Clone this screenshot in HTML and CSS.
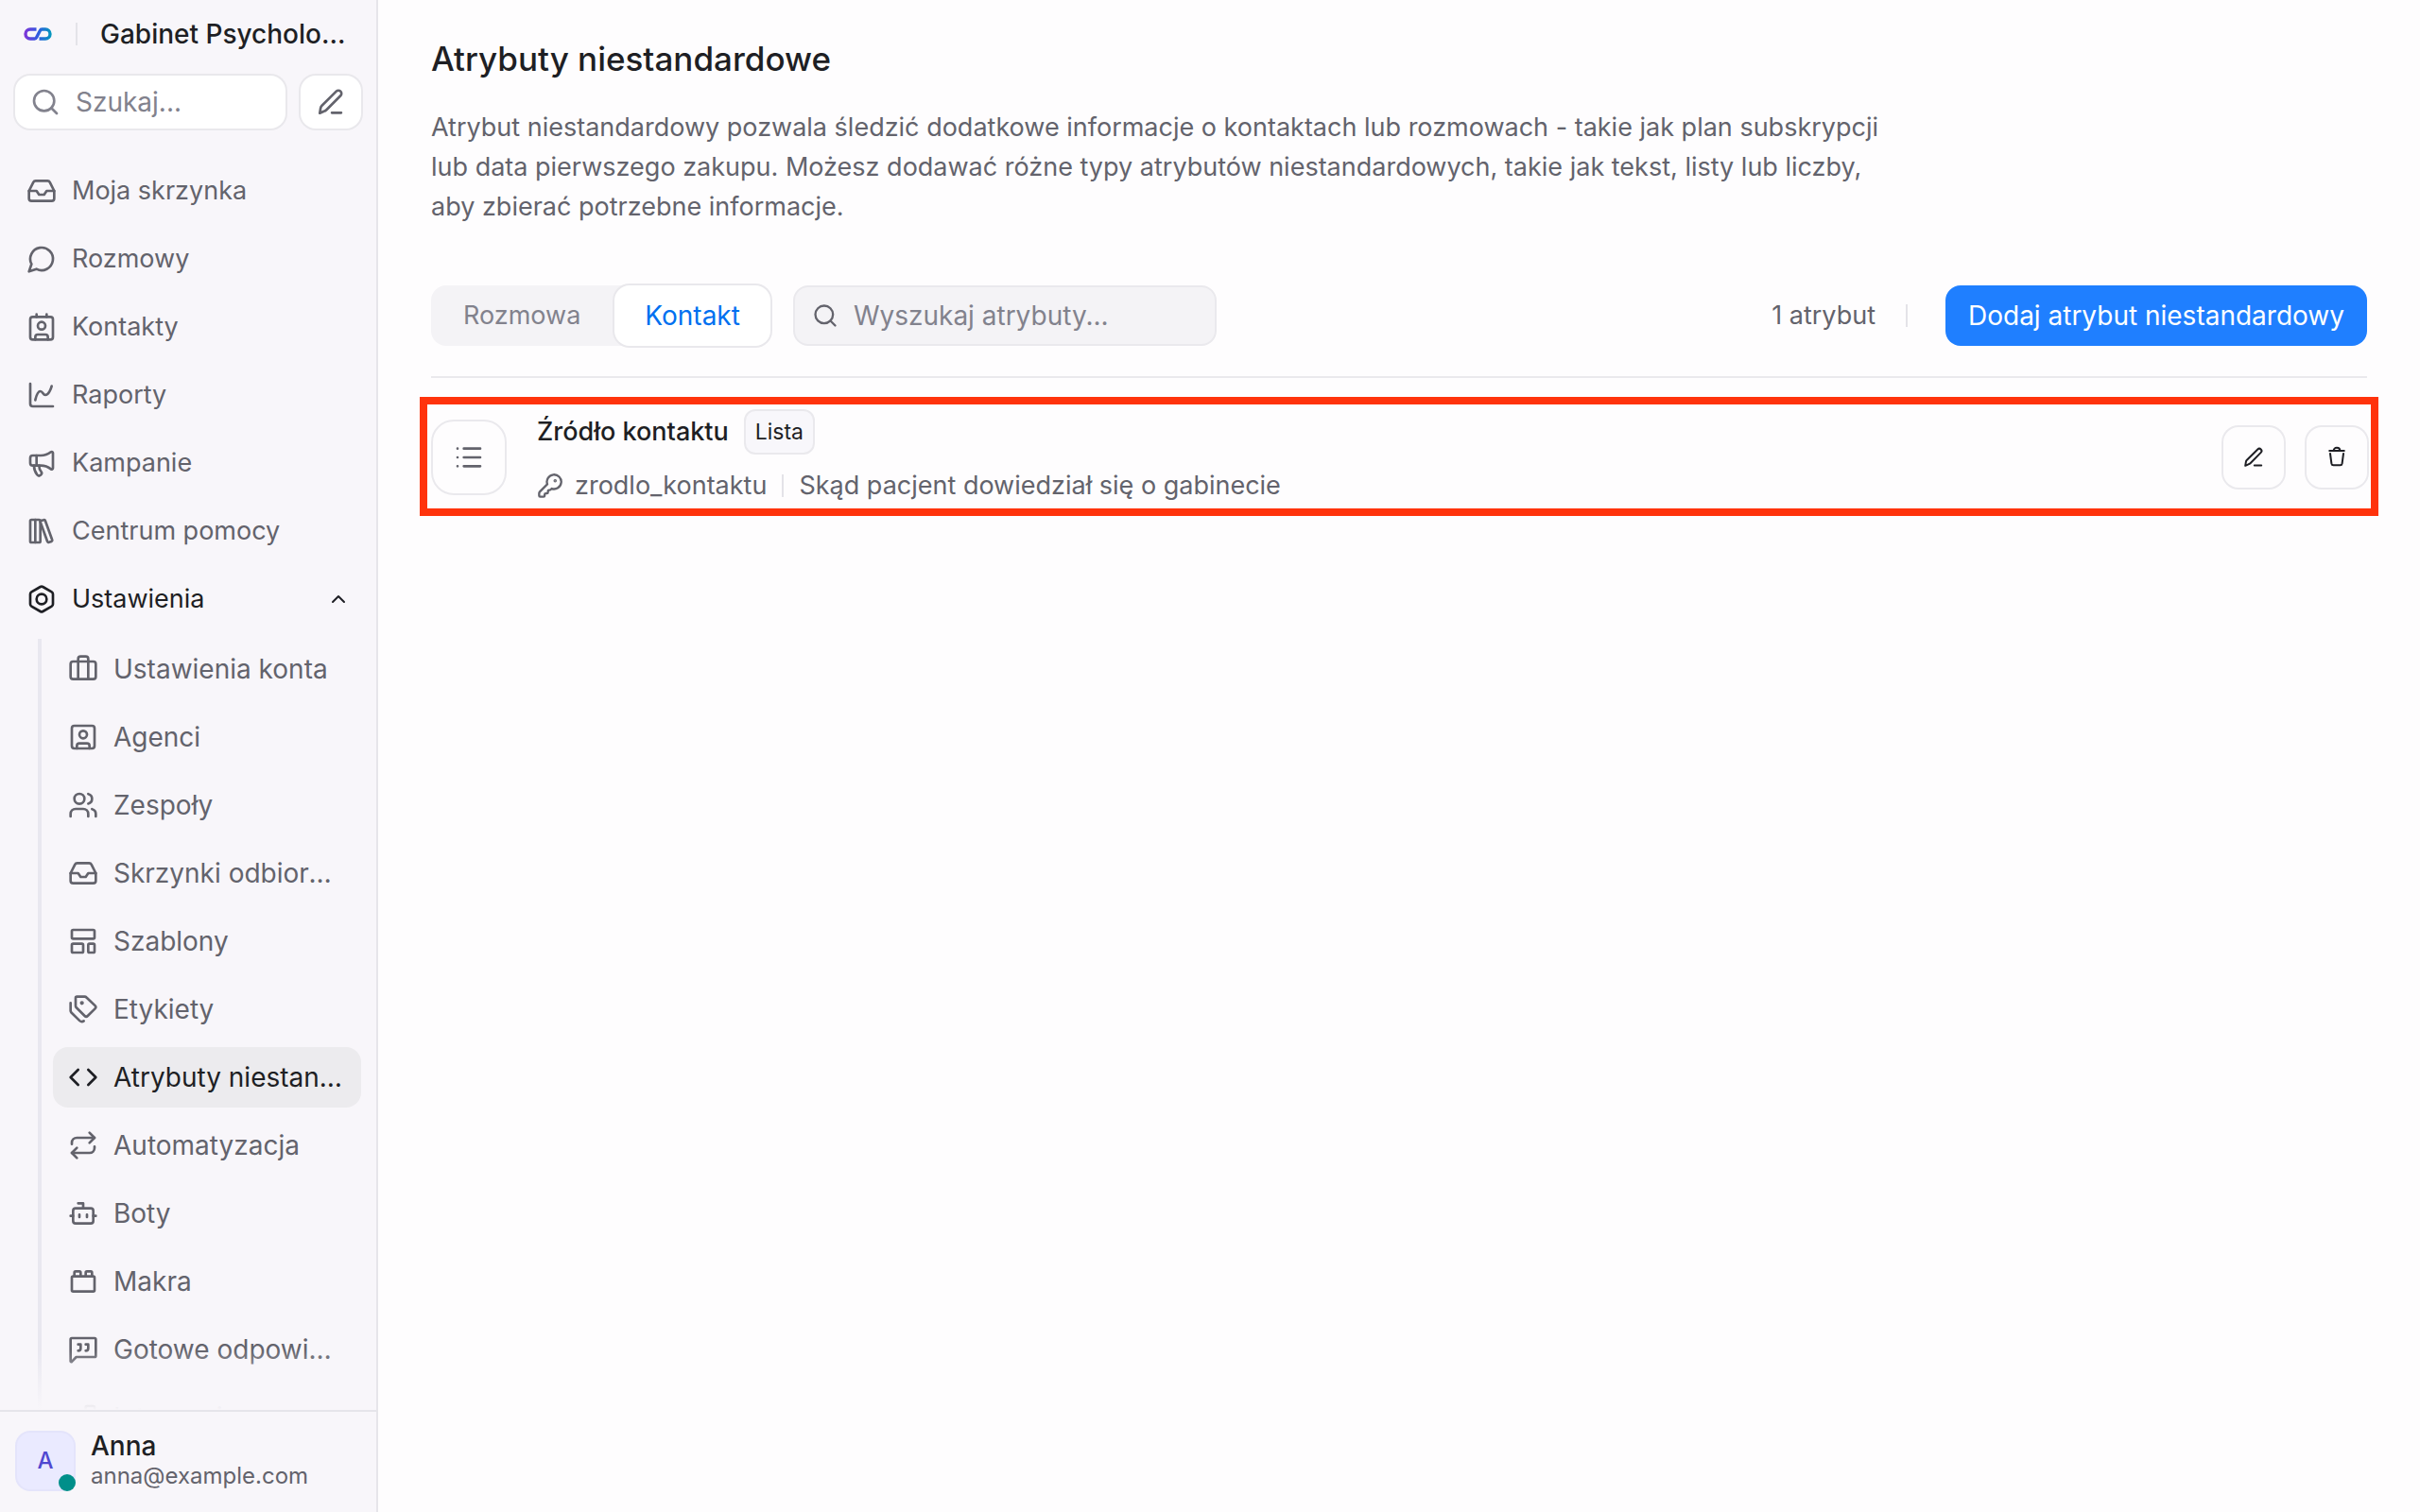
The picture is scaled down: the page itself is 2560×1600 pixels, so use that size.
FILE: index.html
```html
<!DOCTYPE html>
<html lang="pl">
<head>
  <meta charset="UTF-8" />
  <meta name="viewport" content="width=device-width, initial-scale=1.0" />
  <title>Atrybuty niestandardowe</title>
  <link rel="stylesheet" href="styles.css">
</head>
<body>
  <aside class="sidebar">
    <div class="brand">
      <svg class="logo" viewBox="0 0 32 16" fill="none" stroke-width="3.4">
        <defs>
          <linearGradient id="logoFill" gradientUnits="userSpaceOnUse" x1="0" y1="0" x2="32" y2="0">
            <stop offset="0" stop-color="#8b2fd6" />
            <stop offset="0.5" stop-color="#2f5be0" />
            <stop offset="1" stop-color="#00a0b8" />
          </linearGradient>
        </defs>
        <path stroke="url(#logoFill)" d="M14.500 3H8a5 5 0 0 0 0 10h4.500q1.500 0 2.200-1.500l3.600-7Q19 3 20.500 3H24a5 5 0 0 1 0 10h-6.500" />
      </svg>
      <span class="divider"></span>
      <span class="account">Gabinet Psychologiczny</span>
    </div>

    <div class="search-row">
      <label class="search">
        <svg class="icon" viewBox="0 0 24 24"><circle cx="11" cy="11" r="8" /><path d="m21 21-4.300-4.300" /></svg>
        <input type="search" placeholder="Szukaj..." aria-label="Szukaj" />
      </label>
      <button class="compose" aria-label="Nowa wiadomość">
        <svg class="icon" viewBox="0 0 24 24"><path d="M12.800 20.500h7.400M3.200 20.800l.7-4.100a3.500 3.500 0 0 1 1-1.900L16.300 3.500a2.400 2.400 0 0 1 3.400 3.400L8.500 18.200a4 4 0 0 1-2 1.100z" /></svg>
      </button>
    </div>

    <nav class="menu">
      <a href="#" class="item">
        <svg class="icon" viewBox="0 0 24 24"><path d="M22 12h-6l-2 3h-4l-2-3H2" /><path d="M5.450 5.110 2 12v6a2 2 0 0 0 2 2h16a2 2 0 0 0 2-2v-6l-3.450-6.890A2 2 0 0 0 16.760 4H7.240a2 2 0 0 0-1.790 1.110z" /></svg>
        <span>Moja skrzynka</span>
      </a>
      <a href="#" class="item">
        <svg class="icon" viewBox="0 0 24 24"><path d="M7.900 20A9 9 0 1 0 4 16.100L2 22Z" /></svg>
        <span>Rozmowy</span>
      </a>
      <a href="#" class="item">
        <svg class="icon" viewBox="0 0 24 24"><path d="M16 2v2M8 2v2M7 22v-2a2 2 0 0 1 2-2h6a2 2 0 0 1 2 2v2" /><circle cx="12" cy="11" r="3" /><rect x="3" y="4" width="18" height="18" rx="2" /></svg>
        <span>Kontakty</span>
      </a>
      <a href="#" class="item">
        <svg class="icon" viewBox="0 0 24 24"><path d="M3 3v16a2 2 0 0 0 2 2h16" /><path d="M7 16c.500-2 1.500-7 4-7 2 0 2 3 4 3 2.500 0 4.500-5 5-7" /></svg>
        <span>Raporty</span>
      </a>
      <a href="#" class="item">
        <svg class="icon" viewBox="0 0 24 24"><path d="M11 6a13 13 0 0 0 8.400-2.800A1 1 0 0 1 21 4v12a1 1 0 0 1-1.600.800A13 13 0 0 0 11 14H5a2 2 0 0 1-2-2V8a2 2 0 0 1 2-2z" /><path d="M6 14a12 12 0 0 0 2.400 7.200 2 2 0 0 0 3.200-2.400A8 8 0 0 1 10 14M8 6v8" /></svg>
        <span>Kampanie</span>
      </a>
      <a href="#" class="item">
        <svg class="icon" viewBox="0 0 24 24"><rect x="3" y="3" width="8" height="18" rx="1" /><path d="M7 3v18M20.400 18.900c.200.500-.100 1.100-.600 1.300l-1.900.700c-.500.200-1.100-.100-1.300-.600L11.100 5.100c-.200-.500.100-1.100.600-1.300l1.900-.700c.500-.200 1.100.100 1.300.600Z" /></svg>
        <span>Centrum pomocy</span>
      </a>
      <a href="#" class="item open">
        <svg class="icon" viewBox="0 0 24 24"><path d="M21 16V8a2 2 0 0 0-1-1.730l-7-4a2 2 0 0 0-2 0l-7 4A2 2 0 0 0 3 8v8a2 2 0 0 0 1 1.730l7 4a2 2 0 0 0 2 0l7-4A2 2 0 0 0 21 16z" /><circle cx="12" cy="12" r="4" /></svg>
        <span>Ustawienia</span>
        <svg class="icon chevron" viewBox="0 0 24 24"><path d="m18 15-6-6-6 6" /></svg>
      </a>

      <div class="submenu">
        <a href="#" class="item">
          <svg class="icon" viewBox="0 0 24 24"><path d="M16 20V4a2 2 0 0 0-2-2h-4a2 2 0 0 0-2 2v16" /><rect x="2" y="6" width="20" height="14" rx="2" /></svg>
          <span>Ustawienia konta</span>
        </a>
        <a href="#" class="item">
          <svg class="icon" viewBox="0 0 24 24"><rect x="3" y="3" width="18" height="18" rx="2" /><circle cx="12" cy="10" r="3" /><path d="M7 21v-2a2 2 0 0 1 2-2h6a2 2 0 0 1 2 2v2" /></svg>
          <span>Agenci</span>
        </a>
        <a href="#" class="item">
          <svg class="icon" viewBox="0 0 24 24"><path d="M16 21v-2a4 4 0 0 0-4-4H6a4 4 0 0 0-4 4v2" /><circle cx="9" cy="7" r="4" /><path d="M22 21v-2a4 4 0 0 0-3-3.870M16 3.130a4 4 0 0 1 0 7.750" /></svg>
          <span>Zespoły</span>
        </a>
        <a href="#" class="item">
          <svg class="icon" viewBox="0 0 24 24"><path d="M22 12h-6l-2 3h-4l-2-3H2" /><path d="M5.450 5.110 2 12v6a2 2 0 0 0 2 2h16a2 2 0 0 0 2-2v-6l-3.450-6.890A2 2 0 0 0 16.760 4H7.240a2 2 0 0 0-1.790 1.110z" /></svg>
          <span>Skrzynki odbiorcze</span>
        </a>
        <a href="#" class="item">
          <svg class="icon" viewBox="0 0 24 24"><rect x="3" y="3" width="18" height="7" rx="1" /><rect x="3" y="14" width="9" height="7" rx="1" /><rect x="16" y="14" width="5" height="7" rx="1" /></svg>
          <span>Szablony</span>
        </a>
        <a href="#" class="item">
          <svg class="icon" viewBox="0 0 24 24"><path d="M7 2h6.200a2 2 0 0 1 1.400.6l6.800 6.500a1.700 1.700 0 0 1 0 2.400l-5.800 5.700a1.700 1.700 0 0 1-2.400 0L6.600 10.700A2 2 0 0 1 6 9.300V3a1 1 0 0 1 1-1z" /><path d="M2 7v6.200a2 2 0 0 0 .6 1.400l6.600 6.500c1 .9 2.300 1 3.300.2" /><circle cx="11" cy="7" r=".6" fill="currentColor" /></svg>
          <span>Etykiety</span>
        </a>
        <a href="#" class="item active">
          <svg class="icon" viewBox="0 0 24 24"><path d="m16 18 6-6-6-6M8 6l-6 6 6 6" /></svg>
          <span>Atrybuty niestandardowe</span>
        </a>
        <a href="#" class="item">
          <svg class="icon" viewBox="0 0 24 24"><path d="m17 2 4 4-4 4" /><path d="M3 11v-1a4 4 0 0 1 4-4h14M7 22l-4-4 4-4" /><path d="M21 13v1a4 4 0 0 1-4 4H3" /></svg>
          <span>Automatyzacja</span>
        </a>
        <a href="#" class="item">
          <svg class="icon" viewBox="0 0 24 24"><path d="M12 8V4H8" /><rect x="4" y="8" width="16" height="12" rx="2" /><path d="M2 14h2M20 14h2M15 13v2M9 13v2" /></svg>
          <span>Boty</span>
        </a>
        <a href="#" class="item">
          <svg class="icon" viewBox="0 0 24 24"><rect x="3" y="8" width="18" height="12" rx="1" /><path d="M10 8V5c0-.600-.400-1-1-1H6a1 1 0 0 0-1 1v3M19 8V5c0-.600-.400-1-1-1h-3a1 1 0 0 0-1 1v3" /></svg>
          <span>Makra</span>
        </a>
        <a href="#" class="item">
          <svg class="icon" viewBox="0 0 24 24"><path d="M2 21.500V4a1 1 0 0 1 1-1h18a1 1 0 0 1 1 1v13a1 1 0 0 1-1 1H6.500L3 21.700q-.6.500-1-.2z" /><path d="M14 13a2 2 0 0 0 2-2V8h-2M8 13a2 2 0 0 0 2-2V8H8" /></svg>
          <span>Gotowe odpowiedzi</span>
        </a>
        <a href="#" class="item">
          <svg class="icon" viewBox="0 0 24 24"><rect x="14" y="3" width="7" height="7" rx="1" /><path d="M10 21V8a1 1 0 0 0-1-1H4a1 1 0 0 0-1 1v12a1 1 0 0 0 1 1h12a1 1 0 0 0 1-1v-5a1 1 0 0 0-1-1H3" /></svg>
          <span>Integracje</span>
        </a>
      </div>
    </nav>

    <div class="profile">
      <div class="avatar">A<span class="status"></span></div>
      <div class="who">
        <div class="name">Anna</div>
        <div class="email">anna@example.com</div>
      </div>
    </div>
  </aside>

  <main class="content">
    <h1>Atrybuty niestandardowe</h1>
    <p class="intro">Atrybut niestandardowy pozwala śledzić dodatkowe informacje o kontaktach lub rozmowach - takie jak plan subskrypcji lub data pierwszego zakupu. Możesz dodawać różne typy atrybutów niestandardowych, takie jak tekst, listy lub liczby, aby zbierać potrzebne informacje.</p>

    <div class="toolbar">
      <div class="tabs">
        <button class="tab">Rozmowa</button>
        <button class="tab selected">Kontakt</button>
      </div>
      <label class="filter">
        <svg class="icon" viewBox="0 0 24 24"><circle cx="11" cy="11" r="8" /><path d="m21 21-4.300-4.300" /></svg>
        <input type="search" placeholder="Wyszukaj atrybuty..." aria-label="Wyszukaj atrybuty" />
      </label>
      <span class="count">1 atrybut</span>
      <span class="divider"></span>
      <button class="add">Dodaj atrybut niestandardowy</button>
    </div>

    <div class="attribute">
      <div class="tile">
        <svg class="icon" viewBox="0 0 24 24"><path d="M8 5h13M8 12h13M8 19h13M3 5h.01M3 12h.01M3 19h.01" /></svg>
      </div>
      <div class="details">
        <div class="heading">
          <h2>Źródło kontaktu</h2>
          <span class="badge">Lista</span>
        </div>
        <div class="meta">
          <div class="key">
            <svg class="icon" viewBox="0 0 24 24"><path d="M2.586 17.414A2 2 0 0 0 2 18.828V21a1 1 0 0 0 1 1h3a1 1 0 0 0 1-1v-1a1 1 0 0 1 1-1h1a1 1 0 0 0 1-1v-1a1 1 0 0 1 1-1h.172a2 2 0 0 0 1.414-.586l.814-.814a6.500 6.500 0 1 0-4-4z" /><circle cx="16.500" cy="7.500" r=".5" fill="currentColor" /></svg>
            <span>zrodlo_kontaktu</span>
          </div>
          <span class="divider"></span>
          <span>Skąd pacjent dowiedział się o gabinecie</span>
        </div>
      </div>
      <div class="actions">
        <button aria-label="Edytuj">
          <svg class="icon" viewBox="0 0 24 24"><path d="M12.800 20.500h7.400M3.200 20.800l.7-4.100a3.500 3.500 0 0 1 1-1.900L16.300 3.500a2.400 2.400 0 0 1 3.400 3.400L8.500 18.200a4 4 0 0 1-2 1.100z" /></svg>
        </button>
        <button aria-label="Usuń">
          <svg class="icon" viewBox="0 0 24 24"><path d="M4.200 5h15.600M8.700 5c0-2 1.300-3.200 3.300-3.200s3.300 1.200 3.300 3.200M5 8l1.400 10.500q.3 1.800 2 1.800h7.200q1.700 0 2-1.800L19 8" /></svg>
        </button>
      </div>
    </div>
  </main>
</body>
</html>
```
FILE: styles.css
```css
* {
  box-sizing: border-box;
}
body {
  margin: 0;
  height: 100vh;
  display: flex;
  overflow: hidden;
  font-family: Inter, "Liberation Sans", sans-serif;
  font-size: 28px;
  line-height: 42px;
  color: #1e1f24;
  background: #fefdfe;
}
h1, h2, p {
  margin: 0;
}
button, input {
  font: inherit;
  color: inherit;
  border: none;
  padding: 0;
}
button {
  cursor: pointer;
}
input {
  background: none;
  outline: none;
  width: 100%;
  min-width: 0;
}
input::placeholder {
  color: #82828d;
  opacity: 1;
}
.icon {
  flex: none;
  width: 32px;
  height: 32px;
  fill: none;
  stroke: currentColor;
  stroke-width: 2;
  stroke-linecap: round;
  stroke-linejoin: round;
}
.divider {
  flex: none;
  width: 2px;
  height: 24px;
  background: #e4e3e8;
}

/* Sidebar */
.sidebar {
  flex: none;
  width: 400px;
  display: flex;
  flex-direction: column;
  background: #f8f6fa;
  border-right: 2px solid #e6e5ea;
}
.brand {
  display: flex;
  align-items: center;
  gap: 24px;
  height: 72px;
  padding: 0 32px 0 24px;
}
.logo {
  flex: none;
  width: 32px;
  height: 16px;
}
.account {
  font-weight: 500;
  white-space: nowrap;
  overflow: hidden;
  text-overflow: ellipsis;
}
.search-row {
  display: flex;
  gap: 16px;
  padding: 8px 16px 34px;
}
.search, .compose {
  display: flex;
  align-items: center;
  height: 56px;
  background: #fff;
  border-radius: 16px;
  box-shadow: 0 0 0 2px #e9e8ec;
}
.search {
  flex: 1;
  gap: 16px;
  padding: 0 16px;
  color: #82828d;
}
.compose {
  justify-content: center;
  width: 64px;
  color: #63636c;
}
.menu {
  position: relative;
  flex: 1;
  min-height: 0;
  overflow: hidden;
  padding: 0 16px;
  display: flex;
  flex-direction: column;
  gap: 8px;
  font-size: 27px;
}
.menu::after {
  content: "";
  position: absolute;
  left: 0;
  right: 0;
  bottom: 0;
  height: 64px;
  background: linear-gradient(to top, #f8f6fa, #f8f6fa00);
}
.item {
  flex: none;
  display: flex;
  align-items: center;
  gap: 16px;
  height: 64px;
  padding: 0 12px;
  border-radius: 16px;
  color: #63636c;
  text-decoration: none;
}
.item span {
  flex: 1;
  white-space: nowrap;
  overflow: hidden;
  text-overflow: ellipsis;
}
.item.open {
  color: #1e1f24;
}
.chevron {
  width: 24px;
  height: 24px;
}
.submenu {
  display: flex;
  flex-direction: column;
  gap: 8px;
  margin: 2px 0 0 24px;
  padding-left: 12px;
  border-left: 4px solid #e9e8f0;
  font-size: 28px;
}
.submenu .item {
  padding: 0 16px;
}
.submenu .active {
  color: #1e1f24;
  background: #ecebee;
}
.profile {
  display: flex;
  align-items: center;
  gap: 16px;
  height: 108px;
  padding: 0 16px 2px;
  border-top: 2px solid #e6e5ea;
}
.avatar {
  position: relative;
  width: 64px;
  height: 64px;
  border: 2px solid #e4e4fb;
  border-radius: 16px;
  background: #eaeaff;
  color: #5048d0;
  font-size: 24px;
  font-weight: 500;
  line-height: 60px;
  text-align: center;
}
.status {
  position: absolute;
  right: -2px;
  bottom: -2px;
  width: 18px;
  height: 18px;
  border-radius: 50%;
  background: #008f8a;
}
.name {
  font-weight: 500;
  line-height: 32px;
}
.email {
  font-size: 24px;
  line-height: 32px;
  color: #63636c;
}

/* Page */
.content {
  flex: 1;
  min-width: 0;
  padding: 38px 56px;
}
h1 {
  font-size: 35px;
  font-weight: 500;
  line-height: 48px;
}
.intro {
  max-width: 1548px;
  margin-top: 28px;
  font-size: 27px;
  color: #63636c;
}
.toolbar {
  display: flex;
  align-items: center;
  margin-top: 62px;
  padding-bottom: 32px;
  border-bottom: 2px solid #eae9ed;
}
.tabs {
  display: flex;
  gap: 2px;
  height: 64px;
  border-radius: 16px;
  background: #f4f3f6;
}
.tab {
  padding: 0 34px;
  background: none;
  color: #82828d;
  border-radius: 16px;
  font-size: 27px;
}
.tab.selected {
  padding: 0 32px;
  background: #fff;
  color: #0070f0;
  font-size: 28px;
  box-shadow: 0 0 0 2px #e9e8ec;
}
.filter {
  display: flex;
  align-items: center;
  gap: 16px;
  width: 448px;
  height: 64px;
  margin-left: 24px;
  padding: 0 18px;
  border: 2px solid #eae9ed;
  border-radius: 16px;
  background: #f4f3f6;
  color: #63636c;
}
.filter .icon {
  width: 28px;
  height: 28px;
}
.count {
  margin-left: auto;
  margin-right: 32px;
  font-size: 27px;
  color: #63636c;
}
.add {
  height: 64px;
  margin-left: 40px;
  padding: 0 24px;
  border-radius: 16px;
  background: #1f7fff;
  color: #fff;
}
.attribute {
  display: flex;
  align-items: center;
  height: 126px;
  margin: 20px -12px 0;
  padding: 2px 4px 0;
  border: 8px solid #ff330c;
}
.tile {
  display: flex;
  align-items: center;
  justify-content: center;
  width: 80px;
  height: 80px;
  margin-right: 32px;
  border: 2px solid #eae9ed;
  border-radius: 24px;
  color: #63636c;
}
.details {
  flex: 1;
  font-size: 27px;
}
.heading, .meta, .key {
  display: flex;
  align-items: center;
}
.heading {
  gap: 16px;
  height: 48px;
}
h2 {
  font-size: 27px;
  font-weight: 500;
}
.badge {
  height: 48px;
  padding: 0 10px;
  border: 2px solid #eae9ed;
  border-radius: 12px;
  background: #f8f7fb;
  font-size: 23px;
  line-height: 44px;
}
.meta {
  gap: 16px;
  margin-top: 12px;
  color: #63636c;
}
.key {
  gap: 12px;
}
.key .icon {
  width: 28px;
  height: 28px;
}
.actions {
  display: flex;
  gap: 24px;
}
.actions button {
  display: flex;
  align-items: center;
  justify-content: center;
  width: 64px;
  height: 64px;
  border-radius: 16px;
  background: none;
  box-shadow: 0 0 0 2px #eae9ed;
}
.actions .icon {
  width: 24px;
  height: 24px;
}
```
